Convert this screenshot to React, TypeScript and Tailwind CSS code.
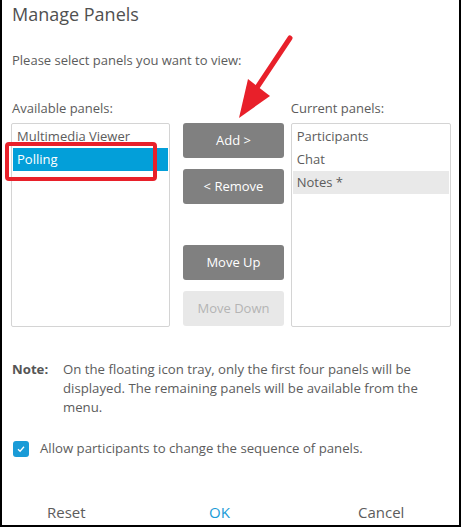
import React from 'react'

const Arrow = () => (
  <svg className="absolute left-0 top-0 pointer-events-none" width="461" height="527">
    <line x1="288" y1="38" x2="252" y2="92" stroke="#e8202a" strokeWidth="5" strokeLinecap="round" />
    <polygon points="237,118 246,79 268,96" fill="#e8202a" />
  </svg>
)

const Btn = ({ label, disabled }: { label: string; disabled?: boolean }) => (
  <div
    className={
      disabled
        ? 'h-[35px] rounded-[3px] bg-[#e8e8e8] text-[#b4b4b4] flex items-center justify-center text-[13px]'
        : 'h-[35px] rounded-[3px] bg-[#808080] text-white flex items-center justify-center text-[13px]'
    }
  >
    {label}
  </div>
)

const App = () => {
  return (
    <div
      className="relative w-[461px] h-[527px] bg-white border-x-2 border-b-2 border-black text-[#5c5c5c] overflow-hidden"
      style={{ fontFamily: '"Open Sans", "Noto Sans", sans-serif' }}
    >
      <div className="pl-[10px] pr-[8px]">
        <h1 className="text-[18px] leading-[28px] text-[#505050]">Manage Panels</h1>
        <p className="mt-[23px] text-[13px] leading-[18px]">Please select panels you want to view:</p>

        <div className="mt-[30px] flex">
          <div className="w-[160px] ml-[-1px]">
            <p className="text-[13px] leading-[18px] pl-[1px]">Available panels:</p>
            <div className="mt-[6px] h-[204px] border border-[#d4d4d4] rounded-[2px] p-[1px] text-[13px]">
              <div className="h-[23px] leading-[23px] px-[4px]">Multimedia Viewer</div>
              <div className="h-[23px] leading-[23px] px-[4px] bg-[#039fd9] text-white">Polling</div>
            </div>
          </div>

          <div className="w-[101px] ml-[13px] mt-[24px] flex flex-col">
            <Btn label="Add >" />
            <div className="mt-[11px]"><Btn label="< Remove" /></div>
            <div className="mt-[41px]"><Btn label="Move Up" /></div>
            <div className="mt-[11px]"><Btn label="Move Down" disabled /></div>
          </div>

          <div className="w-[161px] ml-[7px]">
            <p className="text-[13px] leading-[18px]">Current panels:</p>
            <div className="mt-[6px] h-[204px] border border-[#d4d4d4] rounded-[2px] p-[1px] text-[13px]">
              <div className="h-[23px] leading-[23px] px-[4px]">Participants</div>
              <div className="h-[23px] leading-[23px] px-[4px]">Chat</div>
              <div className="h-[23px] leading-[23px] px-[4px] bg-[#e9e9e9]">Notes *</div>
            </div>
          </div>
        </div>

        <div className="mt-[33px] flex text-[13.2px] leading-[19px]">
          <span className="w-[51px] font-bold text-[#555]">Note:</span>
          <p>
            On the floating icon tray, only the first four panels will be
            <br />
            displayed. The remaining panels will be available from the
            <br />
            menu.
          </p>
        </div>

        <div className="mt-[22px] flex items-center ml-[1px]">
          <div className="w-[16px] h-[16px] rounded-[3px] bg-[#1a9bd7] flex items-center justify-center">
            <svg width="10" height="10" viewBox="0 0 10 10">
              <path d="M2 5.2 L4.1 7.2 L8 2.8" stroke="white" strokeWidth="1.3" fill="none" />
            </svg>
          </div>
          <span className="ml-[11px] text-[13.2px]">Allow participants to change the sequence of panels.</span>
        </div>
      </div>

      <div className="absolute left-0 right-0 bottom-0 h-[30px] text-[15px]">
        <span className="absolute left-[45px] top-[6px]">Reset</span>
        <span className="absolute left-[207px] top-[6px] text-[#1a9bd7]">OK</span>
        <span className="absolute left-[356px] top-[6px]">Cancel</span>
      </div>

      <div className="absolute left-[3px] top-[142px] w-[152px] h-[39px] border-4 border-[#e8202a] rounded-[4px] pointer-events-none" />
      <Arrow />
    </div>
  )
}

export default App
